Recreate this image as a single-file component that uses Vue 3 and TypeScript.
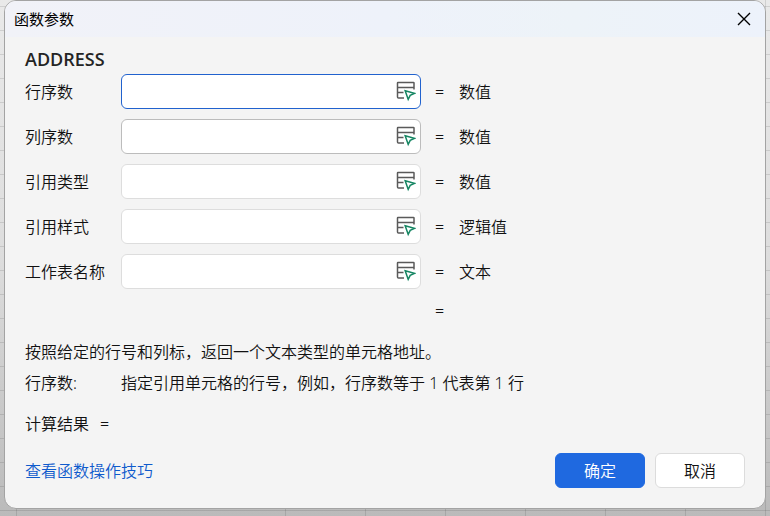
<script setup lang="ts">
import { ref } from 'vue'

interface Argument {
  id: string
  label: string
  kind: string
  state: 'active' | 'required' | 'optional'
  value: string
}

const args = ref<Argument[]>([
  { id: 'row', label: '行序数', kind: '数值', state: 'active', value: '' },
  { id: 'column', label: '列序数', kind: '数值', state: 'required', value: '' },
  { id: 'reference', label: '引用类型', kind: '数值', state: 'optional', value: '' },
  { id: 'style', label: '引用样式', kind: '逻辑值', state: 'optional', value: '' },
  { id: 'sheet', label: '工作表名称', kind: '文本', state: 'optional', value: '' },
])
</script>

<template>
  <div class="sheet">
    <form class="dialog" role="dialog" aria-labelledby="dialog-title" @submit.prevent>
      <header class="titlebar">
        <h1 id="dialog-title" class="title">函数参数</h1>
        <button class="close" type="button" aria-label="关闭">
          <svg width="14" height="14" viewBox="0 0 14 14" fill="none" stroke="currentColor" stroke-width="1.4">
            <path d="M1 1 13 13M13 1 1 13" />
          </svg>
        </button>
      </header>

      <main class="content">
        <h2 class="function-name">ADDRESS</h2>

        <div class="arguments">
          <div v-for="arg in args" :key="arg.id" class="argument">
            <label :for="arg.id">{{ arg.label }}</label>
            <div class="field" :class="arg.state">
              <input :id="arg.id" v-model="arg.value" type="text" autocomplete="off" />
              <button class="picker" type="button" :aria-label="'选择' + arg.label">
                <svg width="20" height="21" viewBox="0 0 20 21" fill="none" stroke-width="1.5">
                  <path
                    class="table-lines"
                    d="M8 17H2.5Q1.5 17 1.5 16V2Q1.5 1.5 2 1.5H17.5Q18 1.5 18 2V8.5M1.5 6.5H18M1.5 11.5H7.5"
                  />
                  <path class="cursor" d="M9.2 9.8 18.3 12.4 14.2 14.3 12.2 18.4Z" />
                </svg>
              </button>
            </div>
            <span class="equals">=</span>
            <span>{{ arg.kind }}</span>
          </div>
          <div class="argument">
            <span class="equals overall">=</span>
          </div>
        </div>

        <p class="description">按照给定的行号和列标，返回一个文本类型的单元格地址。</p>
        <dl class="hint">
          <dt>行序数:</dt>
          <dd>指定引用单元格的行号，例如，行序数等于 1 代表第 1 行</dd>
        </dl>
        <p class="result"><span>计算结果</span><span>=</span></p>

        <footer class="footer">
          <a href="#">查看函数操作技巧</a>
          <div class="actions">
            <button class="action primary" type="submit">确定</button>
            <button class="action" type="button">取消</button>
          </div>
        </footer>
      </main>
    </form>
  </div>
</template>

<style>
body {
  margin: 0;
  background: #bababa;
}
</style>

<style scoped>
* {
  box-sizing: border-box;
}

.sheet {
  min-height: 100vh;
  padding: 0 4px 7px;
  background:
    repeating-linear-gradient(to bottom, transparent 0 6px, #0000001c 6px 7px, transparent 7px 24px),
    linear-gradient(#0000001c, #0000001c) 16px 0 / 1px 100% no-repeat,
    repeating-linear-gradient(to right, transparent 0 45px, #0000001c 45px 46px, transparent 46px 80px) 240px 0 / 100% 100% no-repeat,
    linear-gradient(to bottom, #e9e9e9, #dddddd 50%, #bababa);
  color: #111;
  font: 350 16px/24px "Noto Sans", "Noto Sans CJK SC", sans-serif;
}

.dialog {
  overflow: hidden;
  border: 1px solid #a3a3a3;
  border-radius: 12px;
  background: #f4f4f4;
}

.titlebar {
  display: flex;
  align-items: center;
  justify-content: space-between;
  height: 36px;
  padding: 0 14px 0 9px;
  background: linear-gradient(to right, #f1f2f8, #eef2fa 50%, #edf3f8 75%, #edf2fb);
  color: #000;
}

.title {
  margin: 0;
  font-size: 15px;
  font-weight: 400;
}

h2,
p,
dl,
dd {
  margin: 0;
}

button {
  font: inherit;
}

.close,
.picker {
  display: flex;
  padding: 0;
  border: 0;
  background: none;
  color: inherit;
}

.content {
  padding: 10px 20px 20px;
}

.function-name {
  margin-bottom: 3px;
  color: #242424;
  font-family: "Open Sans", "Noto Sans", sans-serif;
  font-size: 18px;
  font-weight: 600;
}

.arguments {
  display: grid;
  gap: 10px;
}

.argument {
  display: grid;
  grid-template-columns: 96px 300px 38px 1fr;
  align-items: center;
}

.field {
  display: flex;
  align-items: center;
  height: 35px;
  padding-right: 4px;
  border: 1px solid #dddddd;
  border-radius: 6px;
  background: #fff;
}

.field.active {
  border-color: #2162ce;
}

.field.required {
  border-color: #bcbcbc;
}

.field input {
  flex: 1;
  min-width: 0;
  padding: 0 8px;
  border: 0;
  outline: 0;
  background: none;
  color: inherit;
  font: inherit;
}

.table-lines {
  stroke: #5a5a5a;
}

.cursor {
  stroke: #168663;
}

.equals {
  padding-left: 14px;
}

.overall {
  grid-column: 3;
}

.description {
  margin-top: 17px;
}

.hint {
  display: grid;
  grid-template-columns: 96px 1fr;
  margin-top: 7px;
}

.result {
  display: flex;
  gap: 11px;
  margin-top: 17px;
}

.footer {
  display: flex;
  align-items: center;
  justify-content: space-between;
  margin-top: 17px;
}

.footer a {
  color: #0f5bcc;
  text-decoration: none;
}

.actions {
  display: flex;
  gap: 10px;
}

.action {
  width: 90px;
  height: 35px;
  padding: 0;
  border: 1px solid #dcdcdc;
  border-radius: 6px;
  background: #fff;
  color: #111;
}

.action.primary {
  border-color: #1f69e0;
  background: #1f69e0;
  color: #fff;
}
</style>
